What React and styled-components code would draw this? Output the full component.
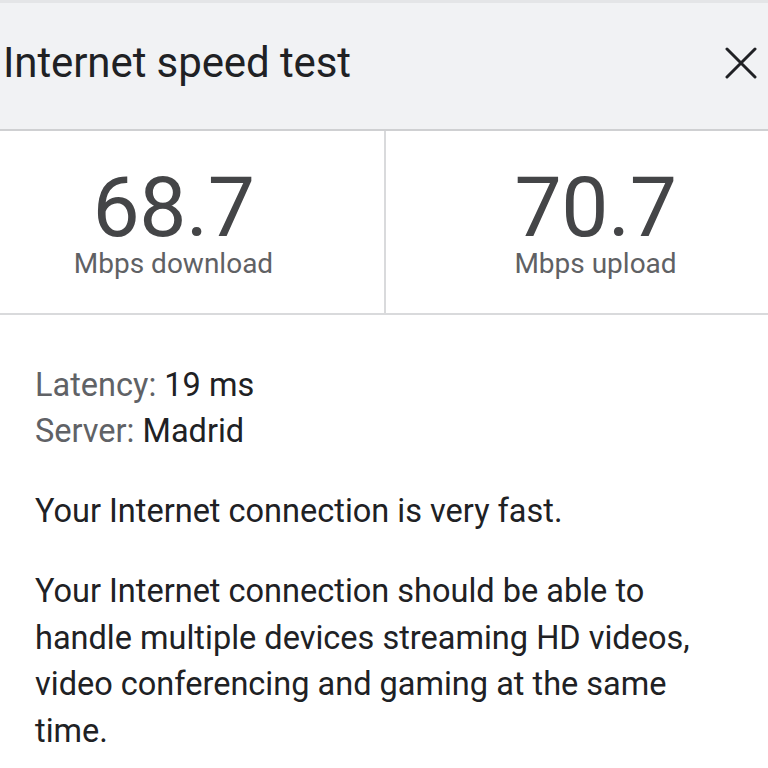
import React from "react";
import styled, { createGlobalStyle } from "styled-components";

const Global = createGlobalStyle`
  html, body { margin: 0; padding: 0; background: #ffffff; }
  body { font-family: Roboto, "Noto Sans", "Liberation Sans", sans-serif; }
`;

const Page = styled.div`
  width: 768px;
  height: 768px;
  overflow: hidden;
  background: #fff;
`;

const Header = styled.header`
  height: 120px;
  background: #f1f2f4;
  border-top: 3px solid #e4e5e7;
  border-bottom: 2px solid #cfd0d2;
  display: flex;
  align-items: center;
  justify-content: space-between;
  padding: 0 11px 6px 3px;
`;

const Title = styled.h1`
  margin: 0;
  font-weight: 400;
  font-size: 42px;
  line-height: 42px;
  letter-spacing: -0.1px;
  color: #202124;
`;

const Close = styled.button`
  border: 0;
  background: none;
  padding: 0;
  width: 32px;
  height: 32px;
  display: flex;
  align-items: center;
  justify-content: center;
  color: #202124;
`;

const Stats = styled.section`
  display: grid;
  grid-template-columns: 1fr 1fr;
  height: 182px;
  border-bottom: 2px solid #d9dadc;
`;

const Stat = styled.div`
  display: flex;
  flex-direction: column;
  align-items: center;
  padding-top: 40px;
  padding-left: ${(p) => (p.$divided ? "37px" : "0")};
  padding-right: ${(p) => (p.$divided ? "0" : "37px")};
  border-left: ${(p) => (p.$divided ? "2px solid #d9dadc" : "none")};
`;

const Value = styled.div`
  font-size: 84px;
  line-height: 74px;
  color: #444547;
  letter-spacing: -0.5px;
`;

const Unit = styled.div`
  margin-top: 2px;
  font-size: 28px;
  line-height: 34px;
  color: #5f6164;
`;

const Body = styled.main`
  padding: 47px 35px 0 35px;
`;

const Meta = styled.div`
  font-size: 32.5px;
  line-height: 46px;
  color: #202124;
`;

const MetaLabel = styled.span`
  color: #606266;
`;

const Para = styled.p`
  margin: ${(p) => p.$mt}px 0 0 0;
  font-size: 32.5px;
  line-height: ${(p) => p.$lh}px;
  color: #202124;
`;

export default function App() {
  return (
    <Page>
      <Global />
      <Header>
        <Title>Internet speed test</Title>
        <Close aria-label="Close">
          <svg width="32" height="32" viewBox="0 0 32 32">
            <path d="M2 2 L30 30 M30 2 L2 30" stroke="#202124" strokeWidth="3" strokeLinecap="round" />
          </svg>
        </Close>
      </Header>
      <Stats>
        <Stat>
          <Value>68.7</Value>
          <Unit>Mbps download</Unit>
        </Stat>
        <Stat $divided>
          <Value>70.7</Value>
          <Unit>Mbps upload</Unit>
        </Stat>
      </Stats>
      <Body>
        <Meta><MetaLabel>Latency: </MetaLabel>19 ms</Meta>
        <Meta><MetaLabel>Server: </MetaLabel>Madrid</Meta>
        <Para $mt={34} $lh={47}>Your Internet connection is very fast.</Para>
        <Para $mt={33} $lh={46.7}>
          Your Internet connection should be able to handle multiple devices streaming HD videos, video conferencing and gaming at the same time.
        </Para>
      </Body>
    </Page>
  );
}
